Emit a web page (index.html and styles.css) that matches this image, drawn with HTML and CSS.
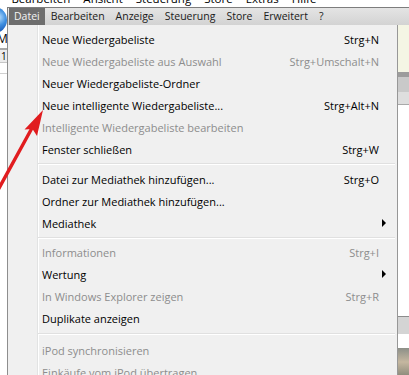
FILE: index.html
```html
<!DOCTYPE html>
<html lang="de">
<head>
    <meta charset="UTF-8">
    <title>Datei-Menü</title>
    <link rel="stylesheet" href="styles.css">
</head>
<body>
    <div id="screen">
        <div class="ghost-bar">
            <div class="ghost-text">
                <span>ei</span><span>Bearbeiten</span><span>Ansicht</span><span>Steuerung</span><span>Store</span><span>Extras</span><span>Hilfe</span>
            </div>
        </div>
        <div class="window-row">
            <div class="left-strip">
                <div class="logo"></div>
                <div class="letter">M</div>
                <div class="tab">1</div>
                <div class="blank"></div>
            </div>
            <div class="app">
                <nav class="menubar">
                    <span class="menu-title active">Datei</span>
                    <span class="menu-title">Bearbeiten</span>
                    <span class="menu-title">Anzeige</span>
                    <span class="menu-title">Steuerung</span>
                    <span class="menu-title">Store</span>
                    <span class="menu-title">Erweitert</span>
                    <span class="menu-title">?</span>
                </nav>
                <div class="below">
                    <ul class="dropdown">
                        <li class="item"><span class="label">Neue Wiedergabeliste</span><span class="key">Strg+N</span></li>
                        <li class="item disabled"><span class="label">Neue Wiedergabeliste aus Auswahl</span><span class="key">Strg+Umschalt+N</span></li>
                        <li class="item"><span class="label">Neuer Wiedergabeliste-Ordner</span><span class="key"></span></li>
                        <li class="item"><span class="label">Neue intelligente Wiedergabeliste...</span><span class="key">Strg+Alt+N</span></li>
                        <li class="item disabled"><span class="label">Intelligente Wiedergabeliste bearbeiten</span><span class="key"></span></li>
                        <li class="item"><span class="label">Fenster schließen</span><span class="key">Strg+W</span></li>
                        <li class="separator"></li>
                        <li class="item"><span class="label">Datei zur Mediathek hinzufügen...</span><span class="key">Strg+O</span></li>
                        <li class="item"><span class="label">Ordner zur Mediathek hinzufügen...</span><span class="key"></span></li>
                        <li class="item submenu"><span class="label">Mediathek</span><span class="key"></span></li>
                        <li class="separator tight"></li>
                        <li class="item disabled"><span class="label">Informationen</span><span class="key">Strg+I</span></li>
                        <li class="item submenu"><span class="label">Wertung</span><span class="key"></span></li>
                        <li class="item disabled"><span class="label">In Windows Explorer zeigen</span><span class="key">Strg+R</span></li>
                        <li class="item"><span class="label">Duplikate anzeigen</span><span class="key"></span></li>
                        <li class="separator wide"></li>
                        <li class="item disabled"><span class="label">iPod synchronisieren</span><span class="key"></span></li>
                        <li class="item disabled"><span class="label">Einkäufe vom iPod übertragen</span><span class="key"></span></li>
                    </ul>
                    <div class="right-strip">
                        <div class="note"></div>
                        <div class="band dark"></div>
                        <div class="band mid"></div>
                        <div class="band light"></div>
                        <div class="white"></div>
                        <div class="band mid short"></div>
                        <div class="white small"></div>
                        <div class="photo"></div>
                    </div>
                </div>
            </div>
        </div>
        <!-- red annotation arrow drawn over the screenshot -->
        <svg class="arrow" width="60" height="200" viewBox="0 0 60 200">
            <line x1="-2" y1="190" x2="32" y2="128" stroke="#e11c1f" stroke-width="3.4" stroke-linecap="round"/>
            <path d="M43 110 L37 136 L32.5 129 L24.5 129.5 Z" fill="#e11c1f"/>
        </svg>
    </div>
</body>
</html>
```

FILE: styles.css
```css
html, body {
    margin: 0;
    padding: 0;
}

body {
    width: 409px;
    height: 375px;
    overflow: hidden;
    background: #ffffff;
    font-family: 'Open Sans', 'Noto Sans', sans-serif;
    font-size: 11px;
    color: #000000;
}

#screen {
    position: relative;
    width: 409px;
    height: 375px;
    overflow: hidden;
}

/* window title menu, cut off at the top of the picture */
.ghost-bar {
    height: 7px;
    overflow: hidden;
    background: #ffffff;
}

.ghost-text {
    display: flex;
    gap: 13px;
    margin-top: -9px;
    margin-left: -11px;
    line-height: 16px;
    font-size: 11.5px;
    white-space: nowrap;
}

.window-row {
    display: flex;
    height: 368px;
}

/* background window, left of the menu */
.left-strip {
    width: 7px;
    display: flex;
    flex-direction: column;
    flex-shrink: 0;
    background: #ffffff;
}

.logo {
    height: 26px;
    margin-left: -18px;
    width: 25px;
    border-radius: 50%;
    background: radial-gradient(circle at 65% 40%, #bfe3ff 0, #3f8fe0 35%, #1450b0 70%, #0a2f78 100%);
}

.letter {
    height: 12px;
    line-height: 12px;
    font-size: 12px;
    margin-left: -3px;
    overflow: hidden;
}

.tab {
    height: 12px;
    margin-top: 3px;
    border-top: 2px solid #a8a8a8;
    border-bottom: 1px solid #c6c6c6;
    background: #ececec;
    font-size: 10px;
    line-height: 12px;
    text-indent: 1px;
}

.blank {
    flex: 1;
    border-top: 1px solid #d0d0d0;
    margin-top: 10px;
}

.app {
    flex: 1;
    display: flex;
    flex-direction: column;
}

.menubar {
    display: flex;
    align-items: center;
    gap: 1px;
    height: 20px;
    padding: 0 1px;
    border-top: 1px solid #7d7d7d;
    border-left: 1px solid #7d7d7d;
    background: linear-gradient(#e4e4e4, #d3d3d3);
    font-size: 10.5px;
}

.menu-title {
    padding: 0 5px;
    height: 17px;
    line-height: 17px;
    color: #1a1a1a;
}

.menu-title.active {
    background: #6e6e6e;
    color: #f4f4f4;
}

.below {
    flex: 1;
    display: flex;
}

.dropdown {
    list-style: none;
    margin: 0;
    padding: 3px 0 0;
    width: 389px;
    flex-shrink: 0;
    border-left: 1px solid #8e8e8e;
    border-right: 1px solid #979797;
    background: linear-gradient(to right, #f0f0f0 29px, #e2e3e3 29px, #e2e3e3 30px, #ffffff 30px, #ffffff 31px, #f0f0f0 31px);
}

.item {
    display: flex;
    align-items: center;
    height: 22px;
    padding: 0 18px 0 34px;
    white-space: nowrap;
}

.label {
    flex: 1;
}

.key {
    text-align: right;
}

.item.disabled {
    color: #8d8d8d;
}

.item.submenu {
    position: relative;
}

.item.submenu::after {
    content: '';
    position: absolute;
    right: 11px;
    top: 7px;
    border-left: 4px solid #000000;
    border-top: 4px solid transparent;
    border-bottom: 4px solid transparent;
}

.separator {
    height: 0;
    margin: 3px 2px 3px 30px;
    border-top: 1px solid #e0e0e0;
    border-bottom: 1px solid #ffffff;
}

.separator.tight {
    margin-bottom: 2px;
}

.separator.wide {
    margin-top: 4px;
    margin-bottom: 4px;
}

/* background window, right of the menu */
.right-strip {
    flex: 1;
    display: flex;
    flex-direction: column;
    background: #ffffff;
}

.note {
    height: 47px;
    background: #f4f5e4;
}

.band.dark {
    height: 5px;
    background: #9c9c9c;
}

.band.mid {
    height: 15px;
    background: #c9c9c9;
}

.band.light {
    height: 12px;
    background: #dedede;
    border-bottom: 1px solid #a9a9a9;
}

.white {
    height: 211px;
    border-bottom: 1px solid #8c8c8c;
}

.band.mid.short {
    height: 17px;
    background: #d4d4d4;
}

.white.small {
    height: 14px;
    border-bottom: none;
}

.photo {
    flex: 1;
    background: linear-gradient(#8c8f88, #c5b7a0 40%, #6f7468);
}

.arrow {
    position: absolute;
    left: 0;
    top: 0;
}
```
